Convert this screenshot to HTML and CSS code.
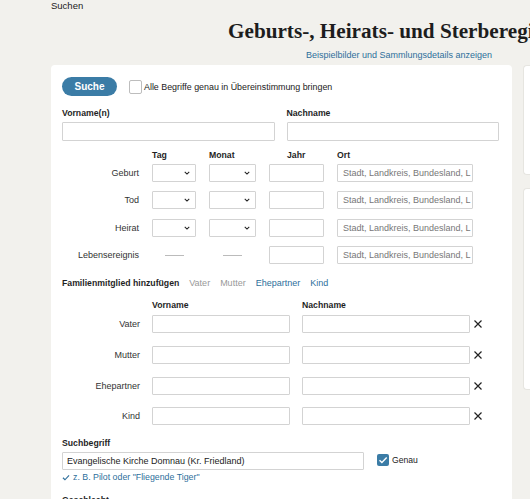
FILE: index.html
```html
<!DOCTYPE html>
<html lang="de">
<head>
<meta charset="utf-8">
<title>Suchen</title>
<link rel="stylesheet" href="styles.css">
</head>
<body>
<header class="top">
  <div class="crumb">Suchen</div>
  <h1 class="title">Geburts-, Heirats- und Sterberegister</h1>
  <a class="sublink" href="#">Beispielbilder und Sammlungsdetails anzeigen</a>
</header>
<main class="layout">
  <section class="card">
    <div class="toolbar">
      <button class="btn">Suche</button>
      <span class="box"></span>
      <span class="boxlabel">Alle Begriffe genau in Übereinstimmung bringen</span>
    </div>

    <div class="names">
      <div class="field">
        <div class="label">Vorname(n)</div>
        <div class="input"></div>
      </div>
      <div class="field">
        <div class="label">Nachname</div>
        <div class="input"></div>
      </div>
    </div>

    <div class="dates">
      <div></div>
      <div class="label">Tag</div>
      <div class="label">Monat</div>
      <div class="label jahr">Jahr</div>
      <div class="label">Ort</div>

      <div class="rowlabel">Geburt</div>
      <div class="select"><svg viewBox="0 0 8 5" class="chev"><path d="M1 1l3 3 3-3"/></svg></div>
      <div class="select"><svg viewBox="0 0 8 5" class="chev"><path d="M1 1l3 3 3-3"/></svg></div>
      <div class="input"></div>
      <div class="input ph">Stadt, Landkreis, Bundesland, L</div>

      <div class="rowlabel">Tod</div>
      <div class="select"><svg viewBox="0 0 8 5" class="chev"><path d="M1 1l3 3 3-3"/></svg></div>
      <div class="select"><svg viewBox="0 0 8 5" class="chev"><path d="M1 1l3 3 3-3"/></svg></div>
      <div class="input"></div>
      <div class="input ph">Stadt, Landkreis, Bundesland, L</div>

      <div class="rowlabel">Heirat</div>
      <div class="select"><svg viewBox="0 0 8 5" class="chev"><path d="M1 1l3 3 3-3"/></svg></div>
      <div class="select"><svg viewBox="0 0 8 5" class="chev"><path d="M1 1l3 3 3-3"/></svg></div>
      <div class="input"></div>
      <div class="input ph">Stadt, Landkreis, Bundesland, L</div>

      <div class="rowlabel">Lebensereignis</div>
      <div class="dash"><span></span></div>
      <div class="dash"><span></span></div>
      <div class="input"></div>
      <div class="input ph">Stadt, Landkreis, Bundesland, L</div>
    </div>

    <div class="family-head">
      <span class="label">Familienmitglied hinzufügen</span>
      <span class="muted">Vater</span>
      <span class="muted">Mutter</span>
      <a href="#" class="link">Ehepartner</a>
      <a href="#" class="link">Kind</a>
    </div>

    <div class="family">
      <div></div>
      <div class="label">Vorname</div>
      <div class="label">Nachname</div>

      <div class="rowlabel">Vater</div>
      <div class="input"></div>
      <div class="last"><div class="input"></div><svg class="x" viewBox="0 0 8 8"><path d="M0.5 0.5l7 7M7.5 0.5l-7 7"/></svg></div>

      <div class="rowlabel">Mutter</div>
      <div class="input"></div>
      <div class="last"><div class="input"></div><svg class="x" viewBox="0 0 8 8"><path d="M0.5 0.5l7 7M7.5 0.5l-7 7"/></svg></div>

      <div class="rowlabel">Ehepartner</div>
      <div class="input"></div>
      <div class="last"><div class="input"></div><svg class="x" viewBox="0 0 8 8"><path d="M0.5 0.5l7 7M7.5 0.5l-7 7"/></svg></div>

      <div class="rowlabel">Kind</div>
      <div class="input"></div>
      <div class="last"><div class="input"></div><svg class="x" viewBox="0 0 8 8"><path d="M0.5 0.5l7 7M7.5 0.5l-7 7"/></svg></div>
    </div>

    <div class="term">
      <div class="label">Suchbegriff</div>
      <div class="termrow">
        <div class="input filled">Evangelische Kirche Domnau (Kr. Friedland)</div>
        <span class="box checked"><svg viewBox="0 0 12 12"><path d="M2.5 6.2l2.4 2.4 4.8-5"/></svg></span>
        <span class="genau">Genau</span>
      </div>
      <div class="hint"><svg viewBox="0 0 9 8"><path d="M1 4.3l2.3 2.3L8 1.5"/></svg>z. B. Pilot oder "Fliegende Tiger"</div>
    </div>

    <div class="label sex">Geschlecht</div>
  </section>
  <aside class="side">
    <div class="panel p1"></div>
    <div class="panel p2"></div>
  </aside>
</main>
</body>
</html>
```

FILE: styles.css
```css
html, body {
  margin: 0;
  padding: 0;
}
body {
  background: #f2f1ed;
  font-family: "Liberation Sans", Arial, sans-serif;
  color: #222;
  overflow: hidden;
  height: 499px;
}
a { text-decoration: none; }

.top {
  padding-left: 51px;
}
.crumb {
  font-size: 9.5px;
  line-height: 11px;
  color: #1a1a1a;
}
.title {
  margin: 7px 0 0 177px;
  font-family: "Liberation Serif", "Times New Roman", serif;
  font-weight: bold;
  font-size: 21.2px;
  line-height: 26px;
  white-space: nowrap;
  color: #1d1d1d;
}
.sublink {
  display: block;
  margin: 5px 0 0 255px;
  font-size: 9px;
  line-height: 12px;
  color: #2e6f9b;
}

.layout {
  display: flex;
  gap: 11px;
  padding-left: 51px;
  margin-top: 4px;
}
.card {
  flex: none;
  width: 461px;
  box-sizing: border-box;
  height: 440px;
  background: #fff;
  border-radius: 4px;
  padding: 12px 13px 0 11px;
}
.side {
  flex: 1;
  display: flex;
  flex-direction: column;
  gap: 13px;
}
.panel {
  background: #fff;
  border-radius: 4px 0 0 4px;
  border: 1px solid #e6e5e0;
  border-right: none;
}
.p1 { height: 108px; }
.p2 { height: 200px; }

.label {
  font-size: 8.7px;
  line-height: 12px;
  font-weight: bold;
  color: #1f1f1f;
  white-space: nowrap;
}
.input {
  box-sizing: border-box;
  height: 18px;
  border: 1px solid #d3d3d3;
  border-radius: 1px;
  background: #fff;
}
.ph {
  font-size: 9px;
  line-height: 16px;
  color: #777;
  padding-left: 5px;
  white-space: nowrap;
  overflow: hidden;
}

.toolbar {
  display: flex;
  align-items: center;
  height: 19px;
}
.btn {
  width: 55px;
  height: 19px;
  border: none;
  border-radius: 10px;
  background: #3b7ca6;
  color: #fff;
  font-family: "Liberation Sans", Arial, sans-serif;
  font-weight: bold;
  font-size: 10px;
  padding: 0;
}
.box {
  box-sizing: border-box;
  width: 13px;
  height: 14px;
  border: 1px solid #bdbdbd;
  border-radius: 2px;
  margin-left: 12px;
  background: #fff;
}
.boxlabel {
  margin-left: 2px;
  font-size: 8.9px;
  color: #222;
  white-space: nowrap;
}

.names {
  display: grid;
  grid-template-columns: 1fr 1fr;
  column-gap: 12px;
  margin-top: 11px;
}
.names .input { height: 19px; margin-top: 3px; }

.dates {
  display: grid;
  grid-template-columns: 77px 44px 47px 55px 136px;
  column-gap: 13px;
  grid-template-rows: 5.6px repeat(4, 18px);
  row-gap: 9.4px;
  margin-top: 8px;
}
.jahr { padding-left: 18px; }
.rowlabel {
  font-size: 9px;
  line-height: 18px;
  text-align: right;
  color: #333;
  white-space: nowrap;
}
.select {
  box-sizing: border-box;
  height: 18px;
  border: 1px solid #d3d3d3;
  border-radius: 1px;
  display: flex;
  align-items: center;
  justify-content: flex-end;
  padding-right: 5px;
}
.chev {
  width: 6px;
  height: 4px;
  fill: none;
  stroke: #222;
  stroke-width: 1.4;
}
.dash {
  display: flex;
  align-items: center;
  justify-content: center;
}
.dash span {
  width: 19px;
  height: 1px;
  background: #bbb;
}

.family-head {
  display: flex;
  gap: 10px;
  align-items: baseline;
  margin-top: 13px;
  font-size: 9px;
  line-height: 12px;
}
.muted { color: #999; }
.link { color: #2e6f9b; }

.family {
  display: grid;
  grid-template-columns: 78px 138px 180px;
  column-gap: 12px;
  grid-template-rows: 3.3px repeat(4, 18px);
  row-gap: 12.7px;
  margin-top: 10px;
}
.last {
  display: flex;
  align-items: center;
  gap: 4px;
}
.last .input { width: 168px; }
.x {
  width: 8px;
  height: 8px;
  stroke: #222;
  stroke-width: 1.2;
}

.term { margin-top: 12px; }
.termrow {
  display: flex;
  align-items: center;
  margin-top: 3px;
}
.filled {
  width: 302px;
  font-size: 9px;
  line-height: 16px;
  padding-left: 4px;
  color: #222;
  white-space: nowrap;
}
.box.checked {
  border: none;
  background: #3b7ca6;
  width: 12px;
  height: 12px;
  margin-left: 13px;
  display: flex;
  align-items: center;
  justify-content: center;
  margin-top: -2px;
}
.box.checked svg {
  width: 12px;
  height: 12px;
  fill: none;
  stroke: #fff;
  stroke-width: 1.4;
}
.genau {
  margin-left: 3px;
  font-size: 8.6px;
  margin-top: -3px;
}
.hint {
  display: flex;
  align-items: center;
  gap: 3px;
  font-size: 8.8px;
  line-height: 12px;
  color: #2e6f9b;
  margin-top: 1px;
}
.hint svg {
  width: 8px;
  height: 7px;
  fill: none;
  stroke: #2e6f9b;
  stroke-width: 1.3;
}
.sex { margin-top: 11px; }
```
